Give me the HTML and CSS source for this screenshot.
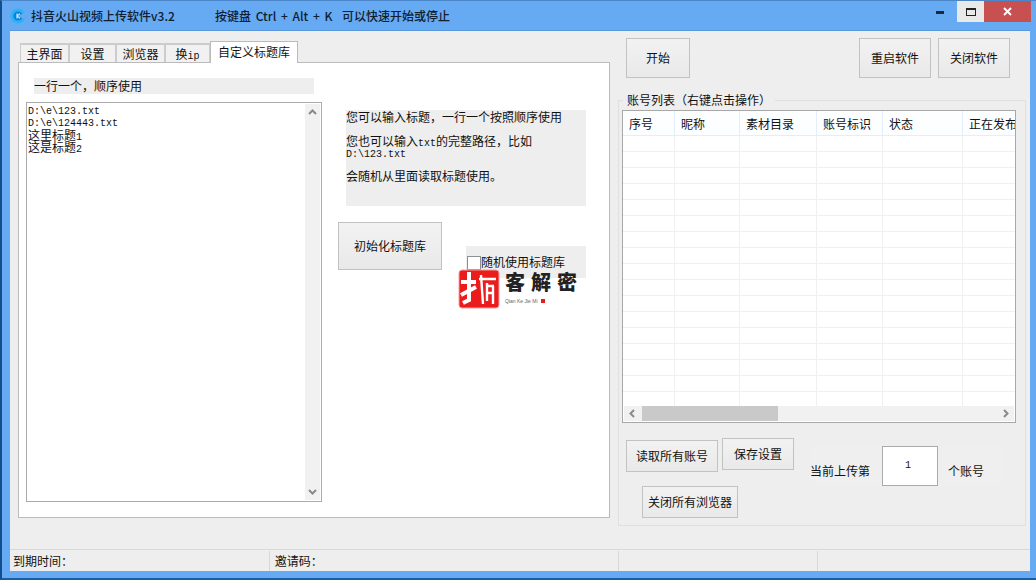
FILE: index.html
```html
<!DOCTYPE html>
<html lang="zh-CN">
<head>
<meta charset="utf-8">
<title>抖音火山视频上传软件v3.2</title>
<link rel="stylesheet" href="styles.css">
</head>
<body>
<div class="window">
  <header class="titlebar">
    <svg class="app-icon" width="16" height="16" viewBox="0 0 16 16"><circle cx="8" cy="8" r="7.5" fill="#2bb4f2"/><circle cx="8" cy="8" r="4.6" fill="#0d7ee6"/><path d="M12.6 5.4L8.6 8L12.6 10.4L15.5 11V5Z" fill="#66aaf3"/><path d="M7 5.5V10.5M7 8L10 5.8M7 8L10 10.2" fill="none" stroke="#bfeaff" stroke-width="1.2"/></svg>
    <span class="app-title">抖音火山视频上传软件v3.2</span>
    <span class="app-hint">按键盘 Ctrl + Alt + K&nbsp; 可以快速开始或停止</span>
    <div class="winctl">
      <span class="ctl ctl-min"><i></i></span>
      <span class="ctl ctl-max"><i></i></span>
      <span class="ctl ctl-close"><svg width="9" height="9" viewBox="0 0 9 9"><path d="M1 1L8 8M8 1L1 8" stroke="#fff" stroke-width="2"/></svg></span>
    </div>
  </header>
  <div class="client">
    <div class="main">
      <section class="left">
        <nav class="tabs">
          <span class="tab t1">主界面</span>
          <span class="tab t2">设置</span>
          <span class="tab t3">浏览器</span>
          <span class="tab t4">换<span class="mono">ip</span></span>
          <span class="tab active">自定义标题库</span>
        </nav>
        <div class="page">
          <div class="hint-bar">一行一个，顺序使用</div>
          <div class="page-body">
            <div class="editor">
              <div class="editor-text">
                <div class="mono ln1">D:\e\123.txt</div>
                <div class="mono ln2">D:\e\124443.txt</div>
                <div class="ln3 ln3a">这里标题<span class="mono">1</span></div>
                <div class="ln3">这是标题<span class="mono">2</span></div>
              </div>
              <div class="vscroll">
                <svg width="9" height="6" viewBox="0 0 9 6"><path d="M1 5L4.5 1.5L8 5" fill="none" stroke="#8a8a8a" stroke-width="2"/></svg>
                <svg width="9" height="6" viewBox="0 0 9 6"><path d="M1 1L4.5 4.5L8 1" fill="none" stroke="#8a8a8a" stroke-width="2"/></svg>
              </div>
            </div>
            <div class="side">
              <div class="info">
                <p class="i1">您可以输入标题，一行一个按照顺序使用</p>
                <p class="i2">您也可以输入<span class="mono">txt</span>的完整路径，比如<br><span class="mono path">D:\123.txt</span></p>
                <p class="i3">会随机从里面读取标题使用。</p>
              </div>
              <button class="btn btn-init">初始化标题库</button>
              <div class="check-row"><span class="checkbox"></span><span>随机使用标题库</span></div>
              <div class="logo">
                <svg class="stamp" width="42" height="40" viewBox="0 0 42 40">
                  <rect x="1" y="1" width="40" height="38" rx="3" fill="#ea1c1c" stroke="#f4a0a0"/>
                  <path d="M3 13H18M11 3V31L5 34M3 26L18 18" fill="none" stroke="#fff" stroke-width="4"/>
                  <path d="M23 6L25 35M21 10H38M29 14V32M29 17H36M29 24H36M35 17V35" fill="none" stroke="#fff" stroke-width="2.4"/>
                </svg>
                <div class="logo-words">
                  <div class="logo-cn">客解密</div>
                  <div class="logo-en">Qian Ke Jie Mi<i></i></div>
                </div>
              </div>
            </div>
          </div>
        </div>
      </section>
      <section class="right">
        <div class="top-actions">
          <button class="btn btn-start">开始</button>
          <button class="btn btn-top push">重启软件</button>
          <button class="btn btn-top">关闭软件</button>
        </div>
        <fieldset class="group">
          <legend>账号列表（右键点击操作）</legend>
          <div class="listview">
            <div class="list-clip">
              <table class="grid">
                <colgroup><col class="c1"><col class="c2"><col class="c3"><col class="c4"><col class="c5"><col class="c6"></colgroup>
                <thead><tr><th>序号</th><th>昵称</th><th>素材目录</th><th>账号标识</th><th>状态</th><th>正在发布</th></tr></thead>
                <tbody>
                  <tr><td></td><td></td><td></td><td></td><td></td><td></td></tr>
                  <tr><td></td><td></td><td></td><td></td><td></td><td></td></tr>
                  <tr><td></td><td></td><td></td><td></td><td></td><td></td></tr>
                  <tr><td></td><td></td><td></td><td></td><td></td><td></td></tr>
                  <tr><td></td><td></td><td></td><td></td><td></td><td></td></tr>
                  <tr><td></td><td></td><td></td><td></td><td></td><td></td></tr>
                  <tr><td></td><td></td><td></td><td></td><td></td><td></td></tr>
                  <tr><td></td><td></td><td></td><td></td><td></td><td></td></tr>
                  <tr><td></td><td></td><td></td><td></td><td></td><td></td></tr>
                  <tr><td></td><td></td><td></td><td></td><td></td><td></td></tr>
                  <tr><td></td><td></td><td></td><td></td><td></td><td></td></tr>
                  <tr><td></td><td></td><td></td><td></td><td></td><td></td></tr>
                  <tr><td></td><td></td><td></td><td></td><td></td><td></td></tr>
                  <tr><td></td><td></td><td></td><td></td><td></td><td></td></tr>
                  <tr><td></td><td></td><td></td><td></td><td></td><td></td></tr>
                  <tr><td></td><td></td><td></td><td></td><td></td><td></td></tr>
                  <tr><td></td><td></td><td></td><td></td><td></td><td></td></tr>
                </tbody>
              </table>
            </div>
            <div class="hscroll">
              <svg width="6" height="9" viewBox="0 0 6 9"><path d="M5 1L1.5 4.5L5 8" fill="none" stroke="#8a8a8a" stroke-width="2"/></svg>
              <span class="thumb"></span>
              <svg width="6" height="9" viewBox="0 0 6 9"><path d="M1 1L4.5 4.5L1 8" fill="none" stroke="#8a8a8a" stroke-width="2"/></svg>
            </div>
          </div>
          <div class="actions">
            <div class="act-buttons">
              <div class="act-row">
                <button class="btn btn-read">读取所有账号</button>
                <button class="btn btn-save">保存设置</button>
              </div>
              <button class="btn btn-closeall">关闭所有浏览器</button>
            </div>
            <div class="counter">
              <span class="counter-l">当前上传第</span>
              <span class="counter-in mono">1</span>
              <span class="counter-r">个账号</span>
            </div>
          </div>
        </fieldset>
      </section>
    </div>
    <footer class="status">
      <span class="s1">到期时间：</span>
      <span class="s2">邀请码：</span>
      <span class="s3"></span>
      <span class="s4"></span>
      <span class="s5"></span>
    </footer>
  </div>
</div>
</body>
</html>
```
FILE: styles.css
```css
* { box-sizing: border-box; }
html, body { margin: 0; padding: 0; background: #66aaf3; }
body { font: 12px/16px "Noto Sans CJK SC", "Liberation Sans", sans-serif; color: #111; }
.mono { font-family: "Liberation Mono", "Noto Sans CJK SC", monospace; font-size: 10px; }
.window {
  width: 1036px; height: 580px; background: #66aaf3; display: flex; flex-direction: column;
  border-top: 1px solid #4a86c8; border-left: 2px solid #134f8e; border-bottom: 2px solid #1d5c9d;
  padding: 0 6px 7px 8px; overflow: hidden;
}
.titlebar { height: 29px; flex: none; display: flex; align-items: center; position: relative; color: #102030; font-weight: 500; }
.app-icon { margin: 0 5px 0 0; flex: none; }
.app-title { width: 184px; }
.app-hint { word-spacing: 2px; }
.winctl { position: absolute; top: 0; right: -1px; display: flex; height: 21px; }
.ctl { display: flex; align-items: center; justify-content: center; height: 21px; }
.ctl-min { width: 34px; }
.ctl-min i { width: 8px; height: 3px; background: #1a2a3a; margin-top: 1px; }
.ctl-max { width: 27px; background: #e9e9e9; }
.ctl-max i { width: 10px; height: 8px; border: 1px solid #222; border-top-width: 2px; }
.ctl-close { width: 47px; background: #c75050; }
.client { flex: 1; min-height: 0; background: #eee; display: flex; flex-direction: column; border-top: 1px solid #5a98dc; }
.main { flex: 1; min-height: 0; display: flex; }
.left { width: 600px; flex: none; margin: 10px 0 0 8px; }
.tabs { height: 21px; display: flex; padding-left: 2px; position: relative; z-index: 1; }
.tab { height: 19px; margin-top: 2px; border: 2px solid #ccc; border-bottom: 0; border-left-width: 1px; border-right-width: 1px; background: #f1f1f1; text-align: center; line-height: 17px; }
.t1 { width: 49px; }
.t2 { width: 47px; }
.t3 { width: 49px; }
.t4 { width: 45px; }
.tab.active { width: 88px; height: 21px; margin-top: 0; background: #fff; border: 1px solid #bbb; border-bottom: 0; line-height: 20px; font-size: 12px; margin-bottom: -1px; height: 22px; }
.page { width: 592px; height: 456px; background: #fff; border: 1px solid #bbb; padding: 15px 7px 0; }
.hint-bar { width: 280px; height: 16px; margin-left: 8px; background: #eee; padding-left: 0; line-height: 16px; }
.page-body { display: flex; margin-top: 8px; position: relative; }
.editor { width: 296px; height: 400px; border: 1px solid #aaa; display: flex; flex: none; }
.editor-text { flex: 1; padding: 3px 0 0 1px; line-height: 11px; }
.ln1, .ln2 { height: 12px; line-height: 11px; }
.ln3 { height: 12px; line-height: 12px; }
.ln3a { margin-top: -1px; }
.vscroll { width: 15px; margin: 1px 1px 1px 0; background: #f1f1f1; display: flex; flex-direction: column; justify-content: space-between; align-items: center; padding: 5px 0; }
.side { position: relative; flex: 1; padding-left: 24px; }
.info { width: 240px; height: 96px; margin-top: 8px; background: #eee; }
.info p { margin: 0; line-height: 14px; }
.i1 { padding-top: 0; }
.i2 { padding-top: 10px; }
.path { display: block; line-height: 11px; margin-top: -2px; }
.i3 { padding-top: 9px; }
.btn { font: inherit; color: #111; background: linear-gradient(#f2f2f2, #e9e9e9); border: 1px solid #c2c2c2; padding: 0; border-radius: 0; display: block; }
.btn-init { width: 104px; height: 48px; margin: 16px 0 0 -8px; }
.check-row { width: 120px; height: 32px; margin: -24px 0 0 120px; background: #eee; display: flex; align-items: flex-end; padding: 0 0 8px 1px; }
.checkbox { width: 14px; height: 14px; background: #fff; border: 1px solid #8f8f8f; }
.logo { position: absolute; left: 136px; top: 167px; display: flex; width: 122px; height: 42px; }
.stamp { flex: none; }
.logo-words { margin-left: 5px; }
.logo-cn { font-size: 20px; font-weight: 900; line-height: 26px; letter-spacing: 6px; color: #222; white-space: nowrap; margin-top: 0; }
.logo-en { font: 5px/8px "Liberation Sans", sans-serif; color: #666; display: flex; align-items: center; gap: 3px; margin-top: 2px; }
.logo-en i { width: 4px; height: 4px; background: #ea1c1c; }
.right { flex: 1; min-width: 0; margin-left: 0; display: flex; flex-direction: column; padding-top: 7px; }
.top-actions { display: flex; height: 40px; padding-left: 8px; }
.btn-start { width: 64px; height: 40px; }
.btn-top { width: 72px; height: 40px; margin-left: 7px; }
.btn-top.push { margin-left: auto; }
.top-actions .btn-top:last-child { margin-right: 20px; }
.group { margin: 15px 4px 0 0; padding: 0 3px; height: 433px; border: 1px solid #e0e0e0; min-width: 0; }
.group legend { margin-left: 1px; padding: 0 4px; line-height: 14px; height: 14px; }
.listview { width: 394px; height: 313px; margin: 3px 0 0 0; border: 1px solid #a8a8a8; background: #fff; display: flex; flex-direction: column; }
.list-clip { flex: 1; min-height: 0; overflow: hidden; }
.grid { border-collapse: separate; border-spacing: 0; table-layout: fixed; width: 421px; }
.c1 { width: 52px; } .c2 { width: 65px; } .c3 { width: 77px; } .c4 { width: 66px; } .c5 { width: 80px; } .c6 { width: 81px; }
.grid th { height: 25px; font-weight: 400; text-align: left; padding: 2px 0 0 6px; background: #fdfeff; border-right: 1px solid #e4eefa; border-bottom: 1px solid #e4eefa; overflow: hidden; white-space: nowrap; }
.grid td { height: 16px; padding: 0; border-right: 1px solid #f0f0f0; border-bottom: 1px solid #f0f0f0; }
.hscroll { height: 15px; flex: none; margin: 0 1px 1px; background: #f1f1f1; display: flex; align-items: center; padding: 0 5px; position: relative; }
.thumb { width: 136px; height: 15px; background: #c9c9c9; margin-left: 7px; margin-right: auto; }
.actions { display: flex; padding: 0 0 0 4px; }
.act-buttons { width: 184px; flex: none; }
.act-row { display: flex; align-items: flex-start; padding-top: 15px; }
.btn-read { width: 92px; height: 32px; margin-top: 2px; }
.btn-save { width: 72px; height: 32px; margin-left: 4px; }
.btn-closeall { width: 96px; height: 32px; margin: 14px 0 0 16px; }
.counter { display: flex; align-items: center; margin-top: 23px; height: 40px; background: #efefef; }
.counter-l { width: 72px; padding-top: 9px; }
.counter-in { width: 56px; height: 40px; background: #fff; border: 1px solid #aaa; text-align: center; line-height: 38px; font-size: 10px; padding-right: 4px; }
.counter-r { width: 64px; padding: 9px 0 0 10px; }
.status { height: 22px; flex: none; display: flex; border-top: 1px solid #d8d8d8; padding-top: 1px; line-height: 20px; }
.status span { border-right: 1px solid #d8d8d8; padding-left: 3px; }
.s1 { width: 261px; }
.status .s2 { width: 351px; padding-left: 5px; }
.s3 { width: 200px; }
.s4 { width: 210px; border-right: 0 !important; }
.s5 { flex: 1; border-right: 0 !important; }
```
